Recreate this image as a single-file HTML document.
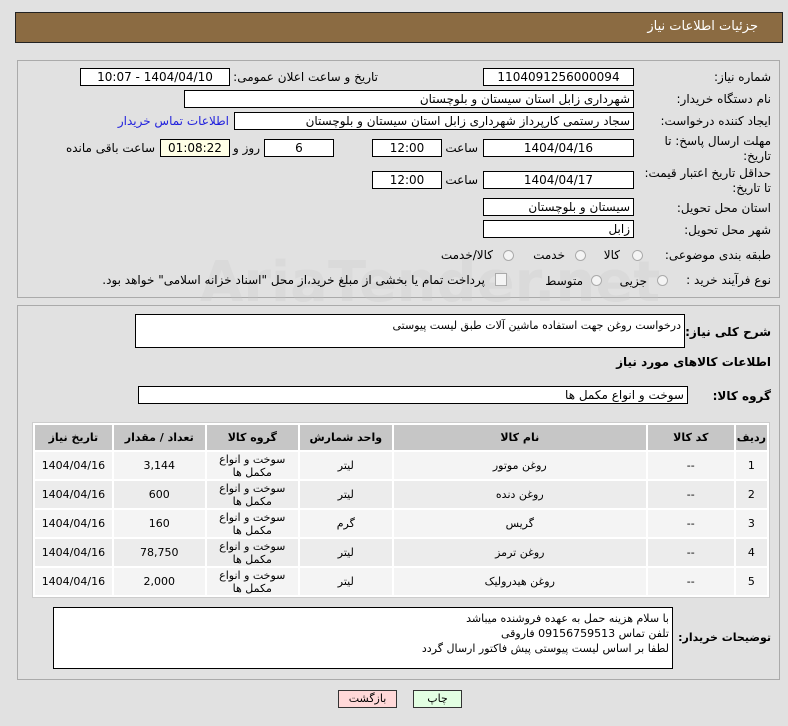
<!DOCTYPE html>
<html><head><meta charset="utf-8"><style>
body{margin:0;width:788px;height:726px;background:#e1e1e1;font-family:"DejaVu Sans","Liberation Sans",sans-serif;font-size:11px;color:#000;position:relative;overflow:hidden;direction:rtl}
.a{position:absolute;white-space:nowrap}
.box{position:absolute;background:#fff;border:1px solid #000;box-sizing:border-box;height:18px;line-height:16px;font-size:12px;text-align:center}
.r{text-align:right;padding-right:3px}
.lbl{position:absolute;white-space:nowrap;font-size:12px}
.b{font-weight:bold}
.rad{position:absolute;width:11px;height:11px;border:1px solid #aaa;border-radius:50%;background:#f4f4f4;box-sizing:border-box}
table{position:absolute;left:32px;top:422px;width:738px;border-collapse:separate;border-spacing:2px;background:#fff;border:1px solid #ccc}
td{text-align:center;font-size:11px;height:27px;padding:0;line-height:13px}
th{background:#c6c6c6;height:23px;font-size:11px;font-weight:bold}
tr.o td{background:#f4f4f4}tr.e td{background:#ececec}
</style></head><body>
<div class="a" style="left:15px;top:12px;width:768px;height:31px;background:#8b6b42;border:1px solid #222;box-sizing:border-box"></div>
<div class="a" style="right:30px;top:19px;color:#fff;font-size:13px">جزئیات اطلاعات نیاز</div>

<div class="a" style="left:17px;top:60px;width:763px;height:238px;border:1px solid #aaa;box-sizing:border-box"></div>
<div class="a" style="left:17px;top:305px;width:763px;height:375px;border:1px solid #aaa;box-sizing:border-box"></div>

<div class="a" style="left:200px;top:250px;font-size:56px;font-weight:bold;color:rgba(200,200,200,.25);direction:ltr">AriaTender.net</div>

<div class="lbl" style="right:17px;top:70px">شماره نیاز:</div>
<div class="box" style="left:483px;top:68px;width:151px">1104091256000094</div>
<div class="lbl" style="right:410px;top:70px">تاریخ و ساعت اعلان عمومی:</div>
<div class="box" style="left:80px;top:68px;width:150px">1404/04/10 - 10:07</div>

<div class="lbl" style="right:17px;top:92px">نام دستگاه خریدار:</div>
<div class="box r" style="left:184px;top:90px;width:450px">شهرداری زابل استان سیستان و بلوچستان</div>

<div class="lbl" style="right:17px;top:114px">ایجاد کننده درخواست:</div>
<div class="box r" style="left:234px;top:112px;width:400px">سجاد رستمی کارپرداز شهرداری زابل استان سیستان و بلوچستان</div>
<div class="lbl" style="right:559px;top:114px;color:#2222dd">اطلاعات تماس خریدار</div>

<div class="lbl" style="right:17px;top:134px;line-height:15px">مهلت ارسال پاسخ: تا<br>تاریخ:</div>
<div class="box" style="left:483px;top:139px;width:151px">1404/04/16</div>
<div class="lbl" style="right:310px;top:141px">ساعت</div>
<div class="box" style="left:372px;top:139px;width:70px">12:00</div>
<div class="box" style="left:264px;top:139px;width:70px">6</div>
<div class="lbl" style="right:528px;top:141px">روز و</div>
<div class="box" style="left:160px;top:139px;width:70px;background:#ffffe6">01:08:22</div>
<div class="lbl" style="right:633px;top:141px">ساعت باقی مانده</div>

<div class="lbl" style="right:17px;top:166px;line-height:15px">حداقل تاریخ اعتبار قیمت:<br>تا تاریخ:</div>
<div class="box" style="left:483px;top:171px;width:151px">1404/04/17</div>
<div class="lbl" style="right:310px;top:173px">ساعت</div>
<div class="box" style="left:372px;top:171px;width:70px">12:00</div>

<div class="lbl" style="right:17px;top:201px">استان محل تحویل:</div>
<div class="box r" style="left:483px;top:198px;width:151px">سیستان و بلوچستان</div>
<div class="lbl" style="right:17px;top:223px">شهر محل تحویل:</div>
<div class="box r" style="left:483px;top:220px;width:151px">زابل</div>

<div class="lbl" style="right:17px;top:248px">طبقه بندی موضوعی:</div>
<div class="rad" style="left:632px;top:250px"></div><div class="lbl" style="right:168px;top:248px">کالا</div>
<div class="rad" style="left:575px;top:250px"></div><div class="lbl" style="right:223px;top:248px">خدمت</div>
<div class="rad" style="left:503px;top:250px"></div><div class="lbl" style="right:295px;top:248px">کالا/خدمت</div>

<div class="lbl" style="right:17px;top:273px">نوع فرآیند خرید :</div>
<div class="rad" style="left:657px;top:275px"></div><div class="lbl" style="right:141px;top:274px">جزیی</div>
<div class="rad" style="left:591px;top:275px"></div><div class="lbl" style="right:205px;top:274px">متوسط</div>
<div class="a" style="left:495px;top:273px;width:10px;height:11px;border:1px solid #aaa;background:#f4f4f4"></div>
<div class="lbl" style="right:303px;top:273px">پرداخت تمام یا بخشی از مبلغ خرید،از محل "اسناد خزانه اسلامی" خواهد بود.</div>

<div class="lbl b" style="right:17px;top:325px">شرح کلی نیاز:</div>
<div class="a" style="left:135px;top:314px;width:550px;height:34px;background:#fff;border:1px solid #000;box-sizing:border-box;text-align:right;padding:4px 3px;font-size:11px">درخواست روغن جهت استفاده ماشین آلات طبق لیست پیوستی</div>
<div class="lbl b" style="right:17px;top:355px">اطلاعات کالاهای مورد نیاز</div>
<div class="lbl b" style="right:17px;top:389px">گروه کالا:</div>
<div class="box r" style="left:138px;top:386px;width:550px">سوخت و انواع مکمل ها</div>

<table>
<tr><th style="width:26px">ردیف</th><th style="width:84px">کد کالا</th><th style="width:250px">نام کالا</th><th style="width:90px">واحد شمارش</th><th style="width:89px">گروه کالا</th><th style="width:89px">تعداد / مقدار</th><th>تاریخ نیاز</th></tr>
<tr class="o"><td>1</td><td>--</td><td>روغن موتور</td><td>لیتر</td><td>سوخت و انواع<br>مکمل ها</td><td>3,144</td><td>1404/04/16</td></tr>
<tr class="e"><td>2</td><td>--</td><td>روغن دنده</td><td>لیتر</td><td>سوخت و انواع<br>مکمل ها</td><td>600</td><td>1404/04/16</td></tr>
<tr class="o"><td>3</td><td>--</td><td>گریس</td><td>گرم</td><td>سوخت و انواع<br>مکمل ها</td><td>160</td><td>1404/04/16</td></tr>
<tr class="e"><td>4</td><td>--</td><td>روغن ترمز</td><td>لیتر</td><td>سوخت و انواع<br>مکمل ها</td><td>78,750</td><td>1404/04/16</td></tr>
<tr class="o"><td>5</td><td>--</td><td>روغن هیدرولیک</td><td>لیتر</td><td>سوخت و انواع<br>مکمل ها</td><td>2,000</td><td>1404/04/16</td></tr>
</table>

<div class="lbl b" style="right:17px;top:631px;font-size:11px">توضیحات خریدار:</div>
<div class="a" style="left:53px;top:607px;width:620px;height:62px;background:#fff;border:1px solid #000;box-sizing:border-box;text-align:right;padding:3px 3px;font-size:11px;line-height:15px;white-space:normal">با سلام هزینه حمل به عهده فروشنده میباشد<br>تلفن تماس 09156759513 فاروقی<br>لطفا بر اساس لیست پیوستی پیش فاکتور ارسال گردد</div>

<div class="a" style="left:338px;top:690px;width:59px;height:18px;background:#ffd8d8;border:1px solid #333;box-sizing:border-box;text-align:center;line-height:16px;font-size:11px">بازگشت</div>
<div class="a" style="left:413px;top:690px;width:49px;height:18px;background:#e2ffe2;border:1px solid #333;box-sizing:border-box;text-align:center;line-height:16px;font-size:11px">چاپ</div>
</body></html>
